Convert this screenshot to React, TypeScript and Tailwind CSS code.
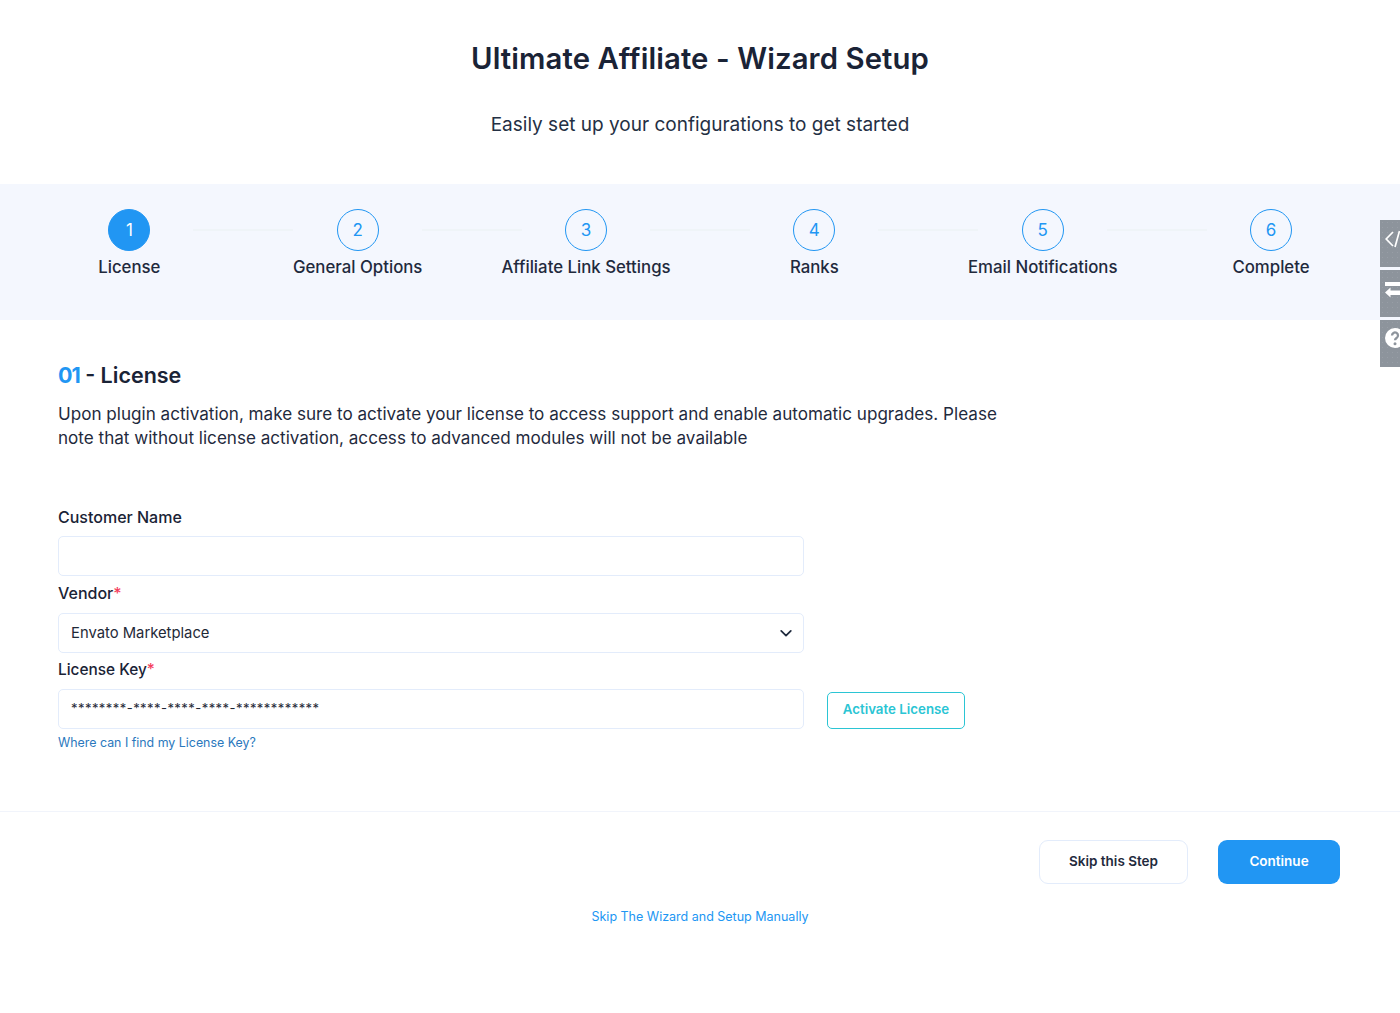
const steps = [
  { n: 1, label: "License" },
  { n: 2, label: "General Options" },
  { n: 3, label: "Affiliate Link Settings" },
  { n: 4, label: "Ranks" },
  { n: 5, label: "Email Notifications" },
  { n: 6, label: "Complete" },
];

const inputClass =
  "h-10 w-[746px] rounded-[5px] border border-[#e3ecfb] bg-white px-3 text-[#1f2937]";

function SideTab({ children }: { children: React.ReactNode }) {
  return (
    <div className="h-[47px] w-5 overflow-hidden bg-[#8d949c] bg-[radial-gradient(#989ea6_0.5px,transparent_0.7px)] bg-[length:5px_5px] pl-[5px]">
      {children}
    </div>
  );
}

export default function App() {
  return (
    <div className="relative h-[1013px] overflow-hidden bg-white font-['Inter',sans-serif] text-[#1a2336]">
      <header className="flex h-[184px] flex-col items-center">
        <h1 className="mt-[41px] text-[29.3px] leading-9 font-semibold tracking-[0.1px]">
          Ultimate Affiliate - Wizard Setup
        </h1>
        <p className="mt-[34px] text-[19px] leading-7 text-[#243044]">
          Easily set up your configurations to get started
        </p>
      </header>

      <section className="grid h-[136px] grid-cols-6 bg-[#f4f7fe] pt-[25px] pr-[14.8px] pl-[15.2px]">
        {steps.map((s, i) => (
          <div key={s.n} className="relative flex flex-col items-center">
            <div
              className={`flex h-[42px] w-[42px] items-center justify-center rounded-full border border-[#2196f3] pt-[1px] text-[17px] ${
                s.n === 1 ? "bg-[#2196f3] text-white" : "text-[#2196f3]"
              }`}
            >
              {s.n}
            </div>
            <div className="mt-[4px] text-[16.8px] leading-6 font-medium whitespace-nowrap text-[#1f2a3d]">
              {s.label}
            </div>
            {i < 5 && (
              <div className="absolute top-[20px] left-[178px] h-[2px] w-[100px] bg-[#eff4f8]" />
            )}
          </div>
        ))}
      </section>

      <main className="px-[58px]">
        <h2 className="mt-[39px] text-[21.5px] leading-8 font-semibold">
          <span className="font-bold tracking-[-1px] text-[#2196f3]">01</span> - License
        </h2>
        <p className="mt-[11px] w-[960px] text-[17.1px] leading-6 text-[#1f2a3d]">
          Upon plugin activation, make sure to activate your license to access support and enable
          automatic upgrades. Please note that without license activation, access to advanced
          modules will not be available
        </p>

        <label className="mt-[55px] block text-[16px] leading-6 font-medium">Customer Name</label>
        <input className={`${inputClass} mt-[7px] block`} />

        <label className="mt-[5px] block text-[16px] leading-6 font-medium">
          Vendor<span className="text-[#f43f5e]">*</span>
        </label>
        <div className={`${inputClass} mt-[8px] flex items-center justify-between pr-[10px] text-[14.8px]`}>
          <span>Envato Marketplace</span>
          <svg width="14" height="14" viewBox="0 0 16 16" fill="none" stroke="#1f2a3d" strokeWidth="2" strokeLinecap="round" strokeLinejoin="round">
            <path d="M2.5 5.5 8 11l5.500-5.500" />
          </svg>
        </div>

        <label className="mt-[5px] block text-[15.4px] leading-6 font-medium">
          License Key<span className="text-[#f43f5e]">*</span>
        </label>
        <div className="mt-[7px] flex items-end gap-[23px]">
          <div className={`${inputClass} flex items-center text-[13px] tracking-[0.45px]`}>
            ********-****-****-****-************
          </div>
          <button className="h-[37px] w-[138px] rounded-[5px] border border-[#2bc5d4] pb-[1px] text-[13.3px] font-semibold text-[#2bc5d4]">
            Activate License
          </button>
        </div>
        <a className="mt-[5px] block text-[12.4px] leading-[18px] text-[#2a78bd]">
          Where can I find my License Key?
        </a>
      </main>

      <div className="mt-[59px] h-px bg-[#f1f4fb]" />

      <div className="mt-[28px] flex justify-end gap-[30px] pr-[60px]">
        <button className="h-11 w-[149px] rounded-[9px] border border-[#e3ecfb] bg-white pb-[1px] text-[13.5px] font-semibold text-[#1f2a3d]">
          Skip this Step
        </button>
        <button className="h-11 w-[122px] rounded-[9px] bg-[#2196f3] pb-[1px] text-[13.5px] font-semibold text-white">
          Continue
        </button>
      </div>

      <div className="mt-[23px] text-center text-[12.5px] leading-[20px] text-[#2196f3]">
        Skip The Wizard and Setup Manually
      </div>

      <aside className="absolute top-[220px] right-0 flex flex-col gap-[3px]">
        <SideTab>
          <svg width="15" height="47" viewBox="0 0 15 47" fill="none" stroke="white" strokeWidth="1.7">
            <path d="M8 12 1.2 19 8 26M14.5 11 10 27" />
          </svg>
        </SideTab>
        <SideTab>
          <svg width="15" height="47" viewBox="0 0 15 47" fill="white">
            <rect x="0" y="12" width="15" height="4" />
            <path d="M0 22.5 5.5 17.5v3H15v4.5H5.5v2.500z" />
          </svg>
        </SideTab>
        <SideTab>
          <svg width="15" height="47" viewBox="0 0 15 47">
            <circle cx="10" cy="18" r="10" fill="white" />
            <path d="M7 15.500a3 3 0 1 1 4.600 2.500c-1 .7-1.600 1.100-1.600 2.200" fill="none" stroke="#8d949c" strokeWidth="2.300" />
            <circle cx="10" cy="23.800" r="1.500" fill="#8d949c" />
          </svg>
        </SideTab>
      </aside>
    </div>
  );
}
